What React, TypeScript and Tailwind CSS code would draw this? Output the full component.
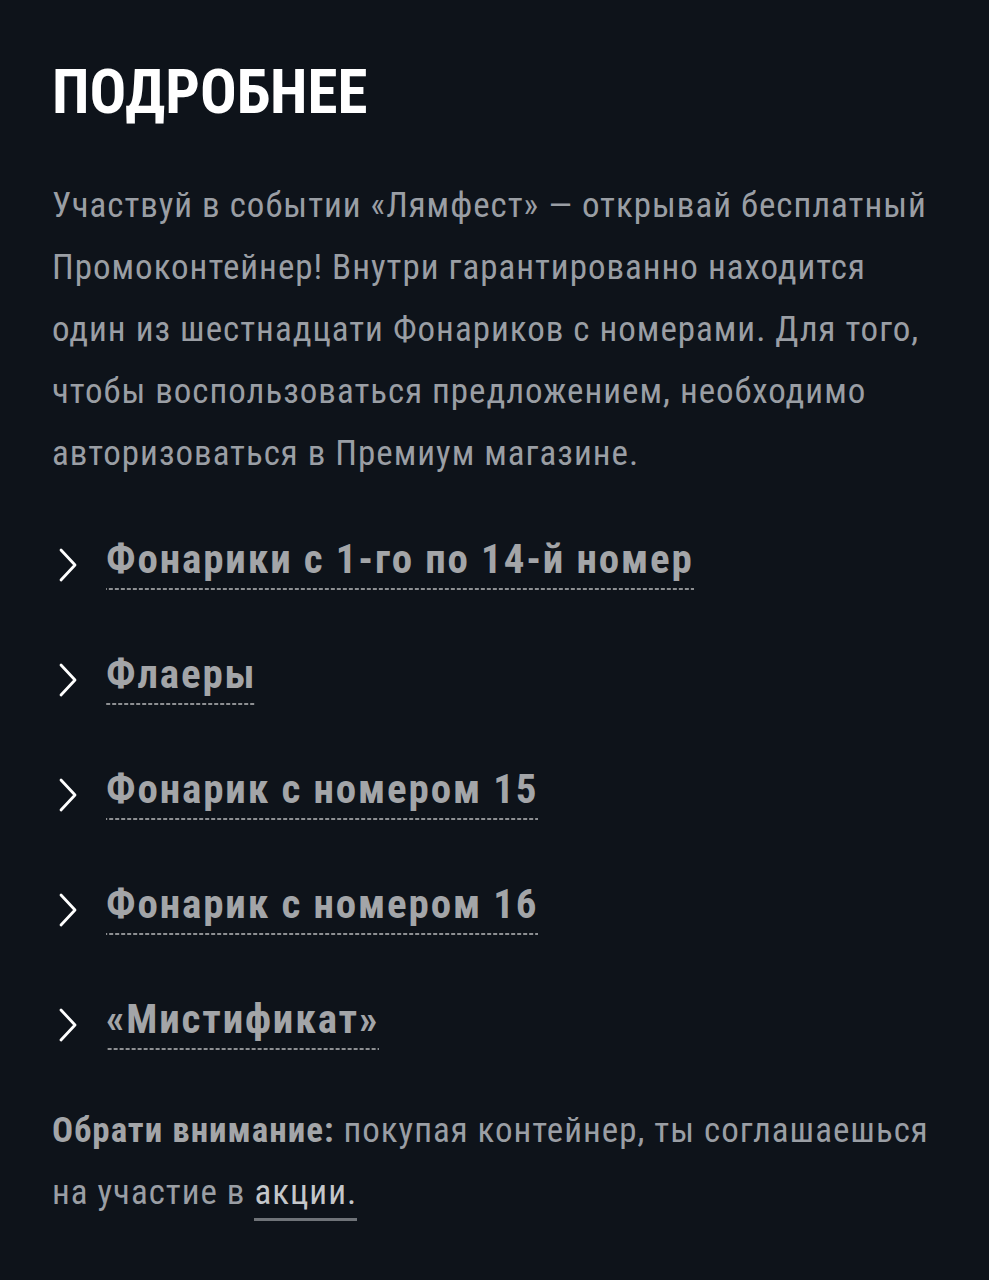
const links = [
  'Фонарики с 1-го по 14-й номер',
  'Флаеры',
  'Фонарик с номером 15',
  'Фонарик с номером 16',
  '«Мистификат»',
]

function Chevron() {
  return (
    <svg width="20" height="34" viewBox="0 0 20 34" fill="none" className="shrink-0">
      <polyline points="3,2 17,17 3,32" stroke="#ffffff" strokeWidth="2.8" strokeLinecap="round" strokeLinejoin="round" />
    </svg>
  )
}

export default function App() {
  return (
    <div className="min-h-[1280px] bg-[#0e131a] px-[52px] pt-[62px] font-['Roboto_Condensed',Roboto,sans-serif]">
      <h2 className="text-[61px] font-bold leading-none text-white">ПОДРОБНЕЕ</h2>

      <p className="mt-[52px] text-[35px] leading-[62px] tracking-[0.028em] text-[#9a9ea4]">
        Участвуй в событии «Лямфест» — открывай бесплатный Промоконтейнер! Внутри гарантированно находится один из
        шестнадцати Фонариков с номерами. Для того, чтобы воспользоваться предложением, необходимо авторизоваться в
        Премиум магазине.
      </p>

      <ul className="mt-[54px] flex flex-col gap-[64px]">
        {links.map((l) => (
          <li key={l} className="flex items-center gap-[28px] pl-[6px]">
            <Chevron />
            <span className="bg-[linear-gradient(to_right,#8d8f92_65%,transparent_0)] bg-[length:6px_2px] bg-bottom bg-repeat-x pb-[10px] text-[41px] font-bold leading-[41px] tracking-[0.045em] text-[#a3a5a8]">
              {l}
            </span>
          </li>
        ))}
      </ul>

      <p className="mt-[50px] text-[35px] leading-[62px] tracking-[0.028em] text-[#9a9ea4]">
        <span className="font-bold text-[#a3a5a8]">Обрати внимание:</span> покупая контейнер, ты соглашаешься на
        участие в{' '}
        <span className="border-b-[3px] border-[#6f7378] pb-[5px] text-[#c4c6c9]">акции.</span>
      </p>
    </div>
  )
}
